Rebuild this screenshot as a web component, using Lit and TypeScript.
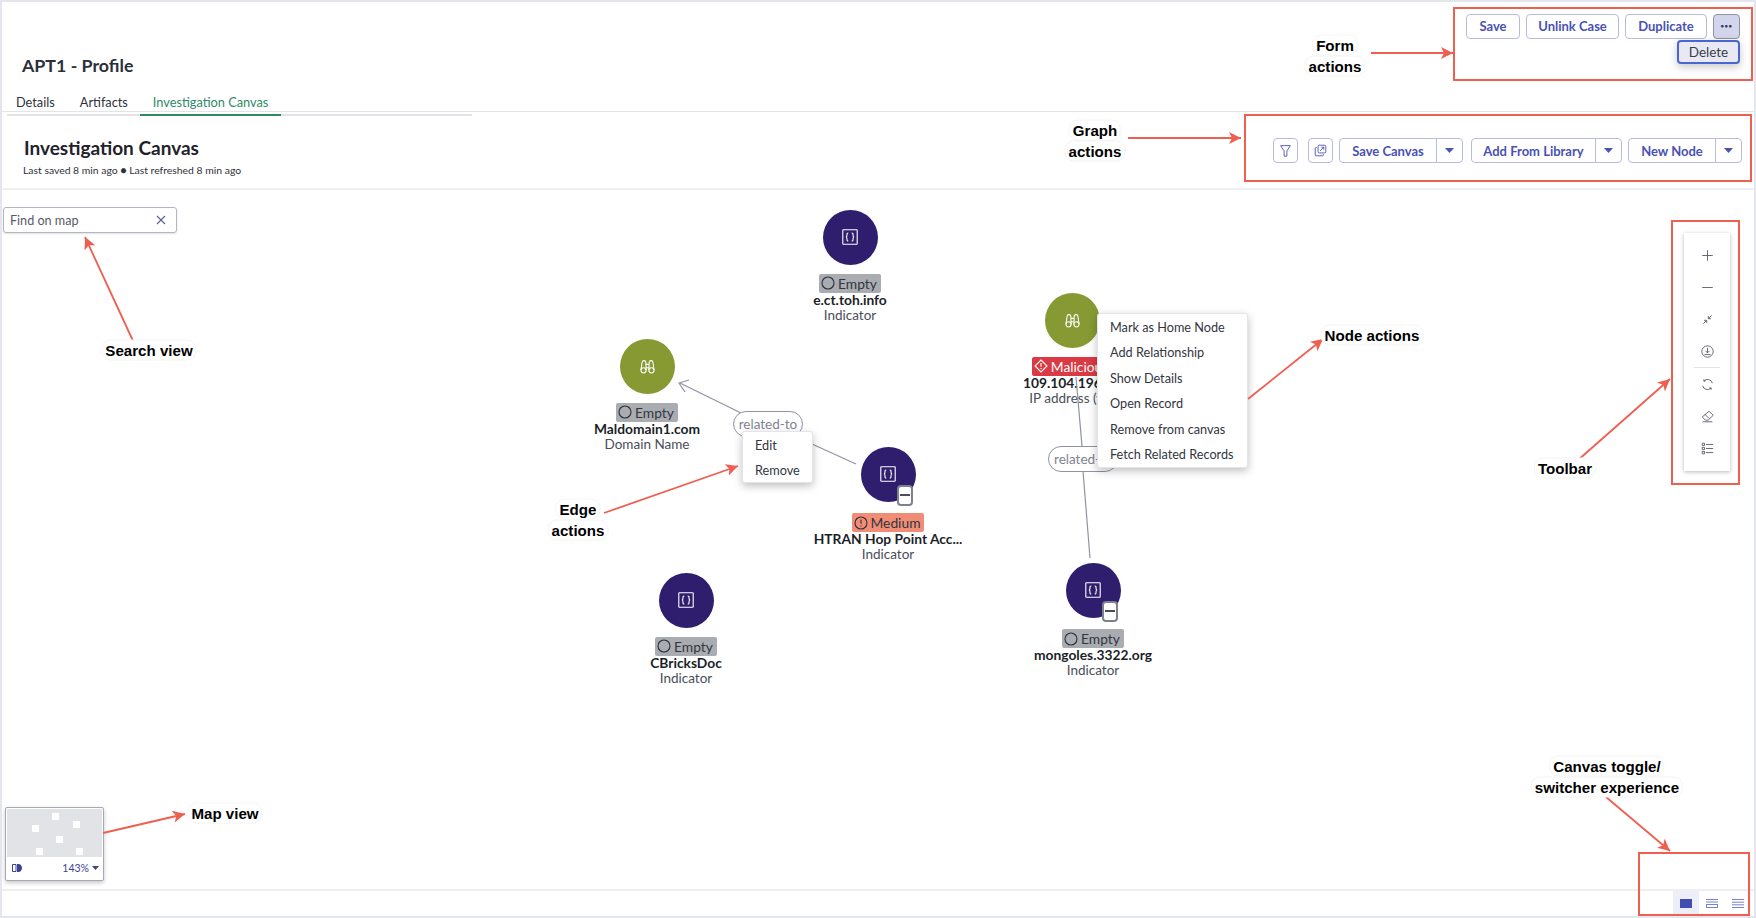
import { LitElement, html, css, svg } from "lit";
import { customElement } from "lit/decorators.js";

const OX = 2;
const OY = 190;

interface GraphNode { x: number; y: number; kind: "ind" | "dom"; sev: "empty" | "medium" | "mal"; label: string; name: string; type: string; collapse?: boolean; }

const NODES: GraphNode[] = [
  { x: 850, y: 237, kind: "ind", sev: "empty", label: "Empty", name: "e.ct.toh.info", type: "Indicator" },
  { x: 647, y: 366, kind: "dom", sev: "empty", label: "Empty", name: "Maldomain1.com", type: "Domain Name" },
  { x: 888, y: 474, kind: "ind", sev: "medium", label: "Medium", name: "HTRAN Hop Point Acc...", type: "Indicator", collapse: true },
  { x: 686, y: 600, kind: "ind", sev: "empty", label: "Empty", name: "CBricksDoc", type: "Indicator" },
  { x: 1072, y: 320, kind: "dom", sev: "mal", label: "Malicious", name: "109.104.196.85", type: "IP address (v4)" },
  { x: 1093, y: 590, kind: "ind", sev: "empty", label: "Empty", name: "mongoles.3322.org", type: "Indicator", collapse: true },
];

const NOTES = [
  { x: 1335, y: 45, t: "Form" }, { x: 1335, y: 66, t: "actions" },
  { x: 1095, y: 130, t: "Graph" }, { x: 1095, y: 151, t: "actions" },
  { x: 149, y: 350, t: "Search view" },
  { x: 1372, y: 335, t: "Node actions" },
  { x: 1565, y: 468, t: "Toolbar" },
  { x: 578, y: 509, t: "Edge" }, { x: 578, y: 530, t: "actions" },
  { x: 225, y: 813, t: "Map view" },
  { x: 1607, y: 766, t: "Canvas toggle/" }, { x: 1607, y: 787, t: "switcher experience" },
];

const ARROWS = [
  [1371, 53, 1453, 53], [1128, 138, 1241, 138], [134, 343, 85, 237], [1248, 399, 1323, 339],
  [1577, 461, 1670, 379], [604, 513, 738, 466], [103, 833, 185, 814], [1606, 797, 1670, 851],
];

const BOXES = [
  [1454, 8, 298, 72], [1245, 115, 506, 66], [1672, 221, 67, 263], [1639, 853, 110, 62],
];

const DOTS = [[52, 813], [32, 825], [73, 821], [56, 836], [36, 848], [76, 848]];

const caret = html`<svg class="caret" width="9" height="5" viewBox="0 0 9 5"><path d="M0 0h9L4.5 5z"/></svg>`;

const indicatorIcon = html`<svg width="16" height="16" viewBox="0 0 16 16" fill="none" stroke="#fff" stroke-width="1.1"><rect x=".8" y=".8" width="14.4" height="14.4" rx=".5"/><path d="M6.300 4c-1.500 0-1.300 1-1.300 2.100 0 1-.1 1.700-1 1.900.9.200 1 .9 1 1.900S4.800 12 6.300 12M9.700 4c1.500 0 1.300 1 1.300 2.100 0 1 .1 1.700 1 1.900-.9.200-1 .9-1 1.900s.2 2.100-1.300 2.100"/></svg>`;
const binocIcon = html`<svg width="15" height="15" viewBox="0 0 14 14" fill="none" stroke="#fff" stroke-width="1"><circle cx="3.300" cy="10.600" r="2.400"/><circle cx="10.700" cy="10.600" r="2.400"/><path d="M.9 10.300 2 2.800c.2-1.700 3.200-1.700 3.400 0l.3 7.800M13.100 10.300 12 2.800c-.2-1.700-3.200-1.700-3.400 0l-.3 7.800M5.500 5h3M5.600 8.200h2.800"/></svg>`;

const sevIcon = (s: GraphNode["sev"]) =>
  s === "empty"
    ? html`<svg width="14" height="14" viewBox="0 0 14 14" fill="none" stroke="#2b2f3a" stroke-width="1.1"><circle cx="7" cy="7" r="6"/></svg>`
    : s === "medium"
    ? html`<svg width="14" height="14" viewBox="0 0 14 14" fill="none" stroke="#2b2f3a" stroke-width="1.1"><circle cx="7" cy="7" r="6"/><path d="M7 3.400v4.400M7 9.400v1.200"/></svg>`
    : html`<svg width="14" height="14" viewBox="0 0 14 14" fill="none" stroke="#fff" stroke-width="1.1"><path d="M7 1 13 7 7 13 1 7z"/><path d="M7 4v3.800M7 9v1.100"/></svg>`;

const toolIcons = [
  html`<svg viewBox="0 0 16 16"><path d="M8 1.500v13M1.500 8h13"/></svg>`,
  html`<svg viewBox="0 0 16 16"><path d="M1.500 8h13"/></svg>`,
  html`<svg viewBox="0 0 16 16"><path d="M3 13 7 9M3.800 9H7v3.200M13 3 9 7M12.200 7H9V3.800"/></svg>`,
  html`<svg viewBox="0 0 16 16"><circle cx="8" cy="8" r="7"/><path d="M8 3.500v6M5.500 7.200 8 9.700l2.500-2.500M4.300 11.800h7.400"/></svg>`,
];
const toolIcons2 = [
  html`<svg viewBox="0 0 16 16"><path d="M14 6.400A6.200 6.200 0 0 0 3.600 3.600M2 9.600a6.200 6.200 0 0 0 10.400 2.800"/><path d="M3.500 1.600v2.200h2.200M12.500 14.400v-2.200h-2.200"/></svg>`,
  html`<svg viewBox="0 0 16 16"><path d="M10 1.500 15 6.500 8.800 12.500H5.500L1.500 8.500zM4.800 5.300l5 5M2 14.500h12"/></svg>`,
  html`<svg viewBox="0 0 16 16"><path d="M6 3h9M6 8h9M6 13h9"/><path d="M1.500 1.500h2.800v2.800H1.500zM1.500 6.600h2.800v2.800H1.500zM1.500 11.700h2.800v2.800H1.500z"/></svg>`,
];

@customElement("app-root")
export class AppRoot extends LitElement {
  static styles = css`
    :host { display: block; width: 1756px; height: 918px; font-family: Lato, "Noto Sans", sans-serif; }
    .page { position: relative; width: 1756px; height: 918px; box-sizing: border-box; padding: 2px; background: #e4e5ed; overflow: hidden; }
    .screen { height: 914px; background: #fff; display: flex; flex-direction: column; }

    .top { height: 110px; flex: none; box-sizing: border-box; border-bottom: 1px solid #e3e4ea; display: flex; justify-content: space-between; }
    .title { margin: 0; padding: 50px 0 0 20px; font-size: 17.8px; line-height: 26px; font-weight: 700; color: #2b2f3a; }
    .tabs { width: 465px; margin: 11px 0 0 5px; height: 27px; box-sizing: border-box; border-bottom: 2px solid #e1e3ea; display: flex; }
    .tab { padding: 0 12.5px; height: 27px; box-sizing: border-box; font-size: 12.75px; line-height: 26px; color: #2f323c; }
    .tab.first { margin-left: -3.500px; }
    .tab.on { color: #2f8a66; border-bottom: 2px solid #2f8a66; }
    .form-actions { position: relative; display: flex; gap: 6px; padding: 12px 14px 0 0; height: 25px; }
    .form-actions .btn { padding-bottom: 1px; }

    .btn { height: 25px; box-sizing: border-box; display: flex; align-items: center; justify-content: center; border: 1px solid #b9bce2; border-radius: 4px; background: #fff; color: #4a51b4; font-size: 13px; font-weight: 700; }
    .save { width: 54px; } .unlink { width: 93px; } .dup { width: 82px; }
    .more { width: 27px; background: #d3d5ec; border-color: #8f92aa; color: #33366a; letter-spacing: .5px; font-size: 6px; line-height: 1; }
    .delete { position: absolute; right: 14px; top: 38px; width: 63px; height: 24px; box-sizing: border-box; background: #e8e9f5; border: 2px solid #4a66d0; border-radius: 4px; font-size: 13.5px; color: #3a3d46; display: flex; align-items: center; justify-content: center; box-shadow: 0 3px 8px rgba(0,0,0,.22); }

    .bar { height: 78px; flex: none; box-sizing: border-box; border-bottom: 2px solid #eeeff3; display: flex; justify-content: space-between; }
    .bar h2 { margin: 0; padding: 23px 0 0 22px; font-size: 19px; line-height: 26px; font-weight: 700; color: #1f222b; }
    .bar p { margin: 2px 0 0 21px; font-size: 10.4px; line-height: 14px; color: #2f323c; }
    .graph-actions { display: flex; padding: 26px 12px 0 0; height: 25px; }
    .icon-btn { width: 25px; color: #4a51b4; }
    .icon-btn svg { width: 13px; height: 13px; fill: none; stroke: #4a51b4; stroke-width: 1.1; }
    .filter { margin-right: 10px; } .copy { margin-right: 6px; }
    .split { display: flex; margin-right: 8px; }
    .split.narrow { margin-right: 6px; }
    .split:last-child { margin-right: 0; }
    .split .lab { border-radius: 4px 0 0 4px; }
    .split .drop { width: 27px; margin-left: -1px; border-radius: 0 4px 4px 0; }
    .l1 { width: 98px; } .l2 { width: 125px; } .l3 { width: 88px; }
    .caret { fill: #4a51b4; }

    .canvas { flex: 1; position: relative; overflow: hidden; }
    .edges { position: absolute; inset: 0; width: 100%; height: 100%; pointer-events: none; }

    .node { position: absolute; width: 200px; margin-left: -100px; display: flex; flex-direction: column; align-items: center; }
    .circle { width: 55px; height: 55px; border-radius: 50%; display: flex; align-items: center; justify-content: center; position: relative; margin-bottom: 9px; }
    .circle.has-minus { margin-bottom: 11.500px; }
    .circle.ind { background: #2f1e6e; }
    .circle.dom { background: #879933; }
    .minus { position: absolute; left: 36px; top: 38px; width: 16px; height: 21px; box-sizing: border-box; border: 2px solid #7c8190; border-radius: 4px; background: #fff; display: flex; align-items: center; justify-content: center; }
    .minus i { display: block; width: 10px; height: 1.5px; background: #4a4e5a; }
    .badge { height: 19px; box-sizing: border-box; display: flex; align-items: center; gap: 3px; padding: 0 4px 0 2px; border-radius: 2px; font-size: 13.8px; color: #33363f; white-space: nowrap; }
    .badge.empty { background: #a9acb0; }
    .badge.medium { background: #f18d76; }
    .badge.mal { background: #da3a44; color: #fff; }
    .name { font-size: 13.8px; line-height: 15px; font-weight: 700; color: #1c1f29; white-space: nowrap; margin: -1px 0 1px; }
    .type { font-size: 13.5px; line-height: 15px; color: #4a4e5a; white-space: nowrap; }

    .pill { position: absolute; width: 70px; height: 26px; box-sizing: border-box; border: 1px solid #8f93a5; border-radius: 13px; background: #fff; color: #80848f; font-size: 13.5px; display: flex; align-items: center; justify-content: center; white-space: nowrap; overflow: hidden; }
    .pill-a { left: 731px; top: 221px; }
    .pill-b { left: 1046px; top: 256px; justify-content: flex-start; padding-left: 5px; }

    .menu { position: absolute; box-sizing: border-box; background: #fff; border: 1px solid #e4e5ea; border-radius: 3px; box-shadow: 0 3px 8px rgba(0,0,0,.25); font-size: 12.7px; color: #33363f; display: flex; flex-direction: column; }
    .menu div { white-space: nowrap; }
    .edge-menu { left: 740px; top: 241px; width: 71px; height: 52px; padding: 0 0 0 12px; justify-content: space-around; }
    .node-menu { left: 1095px; top: 123px; width: 151px; height: 155px; padding: .5px 0 0 12px; }
    .node-menu div { line-height: 25.6px; }

    .search { position: absolute; left: 1px; top: 17px; width: 174px; height: 26px; box-sizing: border-box; border: 1px solid #b3b6c2; border-radius: 3px; display: flex; align-items: center; justify-content: space-between; padding: 0 10px 0 6px; font-size: 12.6px; color: #565a66; box-shadow: 0 1px 2px rgba(0,0,0,.12); }
    .search svg { width: 10px; height: 10px; stroke: #5a5f99; fill: none; stroke-width: 1.1; }

    .mini { position: absolute; left: 3px; top: 617px; width: 99px; height: 74px; box-sizing: border-box; border: 1px solid #a6a8b4; border-radius: 2px; background: #fff; box-shadow: 0 2px 4px rgba(0,0,0,.22); padding: 1px; display: flex; flex-direction: column; }
    .preview { height: 48px; flex: none; background: #e2e3e7; position: relative; }
    .preview i { position: absolute; width: 7px; height: 7px; background: #fff; }
    .mini-foot { flex: 1; display: flex; align-items: center; justify-content: space-between; padding: 0 3px 0 5px; color: #3e4390; font-size: 10.5px; }
    .mini-foot span { display: flex; align-items: center; gap: 3px; }
    .mini-foot .caret { fill: #3e4390; width: 7px; height: 4px; }
    .mini-foot svg.book { width: 10px; height: 10px; }

    .toolbar { position: absolute; left: 1682px; top: 43px; width: 46px; height: 238px; box-sizing: border-box; padding-top: 6px; background: #fff; box-shadow: 0 1px 4px rgba(0,0,0,.28); display: flex; flex-direction: column; align-items: center; }
    .tool { height: 32px; flex: none; display: flex; align-items: center; justify-content: center; }
    .tool svg { width: 13px; height: 13px; fill: none; stroke: #565b68; stroke-width: 1.1; }
    .sep { width: 26px; height: 1px; flex: none; background: #e3e4e8; }

    .foot { height: 27px; flex: none; box-sizing: border-box; border-top: 2px solid #eeeff3; display: flex; justify-content: flex-end; padding-right: 3px; }
    .view { width: 26px; display: flex; align-items: center; justify-content: center; }
    .view.on { background: #eeeef8; }
    .view svg { width: 12px; height: 9px; }

    .overlay { position: absolute; inset: 0; width: 1756px; height: 918px; pointer-events: none; }
    .note { position: absolute; transform: translate(-50%, -50%); font-family: "Liberation Sans", Arial, sans-serif; font-weight: 700; font-size: 15.1px; line-height: 19px; color: #000; white-space: nowrap; background: #fff; border: 1px solid #f4f4f6; border-radius: 9px; padding: 0 3px; }
  `;

  renderNode(n: GraphNode) {
    return html`<div class="node" style="left:${n.x - OX}px;top:${n.y - 27.5 - OY}px">
      <div class="circle ${n.kind} ${n.collapse ? "has-minus" : ""}">
        ${n.kind === "ind" ? indicatorIcon : binocIcon}
        ${n.collapse ? html`<div class="minus"><i></i></div>` : ""}
      </div>
      <div class="badge ${n.sev}">${sevIcon(n.sev)}${n.label}</div>
      <div class="name">${n.name}</div>
      <div class="type">${n.type}</div>
    </div>`;
  }

  render() {
    return html`<div class="page">
      <div class="screen">
        <header class="top">
          <div>
            <h1 class="title">APT1 - Profile</h1>
            <nav class="tabs">
              <div class="tab first">Details</div>
              <div class="tab">Artifacts</div>
              <div class="tab on">Investigation Canvas</div>
            </nav>
          </div>
          <div class="form-actions">
            <div class="btn save">Save</div>
            <div class="btn unlink">Unlink Case</div>
            <div class="btn dup">Duplicate</div>
            <div class="btn more">•••</div>
            <div class="delete">Delete</div>
          </div>
        </header>
        <section class="bar">
          <div>
            <h2>Investigation Canvas</h2>
            <p>Last saved 8 min ago ● Last refreshed 8 min ago</p>
          </div>
          <div class="graph-actions">
            <div class="btn icon-btn filter"><svg viewBox="0 0 16 16"><path d="M2 2h12L9.700 8.500V15H6.300V8.500z"/></svg></div>
            <div class="btn icon-btn copy"><svg viewBox="0 0 16 16"><rect x="5" y="1.500" width="9.500" height="9.500" rx="1.500"/><path d="M3.500 4.500h-1a1 1 0 0 0-1 1v8a1 1 0 0 0 1 1h8a1 1 0 0 0 1-1v-1M7.500 8.500 12 4M9 4h3v3"/></svg></div>
            <div class="split"><div class="btn lab l1">Save Canvas</div><div class="btn drop">${caret}</div></div>
            <div class="split narrow"><div class="btn lab l2">Add From Library</div><div class="btn drop">${caret}</div></div>
            <div class="split"><div class="btn lab l3">New Node</div><div class="btn drop">${caret}</div></div>
          </div>
        </section>
        <main class="canvas">
          ${NODES.map((n) => this.renderNode(n))}
          <svg class="edges" viewBox="2 190 1752 699">
            <g fill="none" stroke="#8f93a5" stroke-width="1.2">
              <path d="M680 383 743 414M812 444 856 464"/>
              <path d="M689 380 679 383 685 392"/>
              <path d="M1076 377 1082 446M1083 471 1090 558"/>
            </g>
          </svg>
          <div class="pill pill-a">related-to</div>
          <div class="pill pill-b">related-to</div>
          <div class="menu edge-menu"><div>Edit</div><div>Remove</div></div>
          <div class="menu node-menu">
            <div>Mark as Home Node</div><div>Add Relationship</div><div>Show Details</div>
            <div>Open Record</div><div>Remove from canvas</div><div>Fetch Related Records</div>
          </div>
          <div class="search">Find on map<svg viewBox="0 0 10 10"><path d="M1 1l8 8M9 1 1 9"/></svg></div>
          <div class="mini">
            <div class="preview">${DOTS.map(([x, y]) => html`<i style="left:${x - 7}px;top:${y - 809}px"></i>`)}</div>
            <div class="mini-foot">
              <svg class="book" viewBox="0 0 10 10"><path d="M.5 1.500h3.500v7H.5z" fill="none" stroke="#3e4390"/><path d="M5 1h1.500C8.500 1 10 2.800 10 5S8.500 9 6.500 9H5z" fill="#3e4390"/></svg>
              <span>143% ${caret}</span>
            </div>
          </div>
          <div class="toolbar">
            ${toolIcons.map((i) => html`<div class="tool">${i}</div>`)}
            <div class="sep"></div>
            ${toolIcons2.map((i) => html`<div class="tool">${i}</div>`)}
          </div>
        </main>
        <footer class="foot">
          <div class="view on"><svg viewBox="0 0 12 9"><rect width="12" height="9" fill="#434fb0"/></svg></div>
          <div class="view"><svg viewBox="0 0 12 9" fill="none" stroke="#7a83cf"><path d="M0 .5h12M0 3h12"/><rect x=".5" y="5.500" width="11" height="3"/></svg></div>
          <div class="view"><svg viewBox="0 0 12 9" fill="none" stroke="#7a83cf"><path d="M0 .5h12M0 3.200h12M0 5.800h12M0 8.500h12"/></svg></div>
        </footer>
      </div>
      <svg class="overlay" viewBox="0 0 1756 918">
        <defs>
          <marker id="head" markerUnits="userSpaceOnUse" markerWidth="14" markerHeight="12" refX="12" refY="6" orient="auto">
            <path d="M0 0 12 6 0 12 3 6z" fill="#ef5f50"/>
          </marker>
        </defs>
        ${BOXES.map(([x, y, w, h]) => svg`<rect x=${x} y=${y} width=${w} height=${h} fill="none" stroke="#ef5f50" stroke-width="2"/>`)}
        ${ARROWS.map(([a, b, c, d]) => svg`<line x1=${a} y1=${b} x2=${c} y2=${d} stroke="#ef5f50" stroke-width="1.800" marker-end="url(#head)"/>`)}
      </svg>
      ${NOTES.map((n) => html`<div class="note" style="left:${n.x}px;top:${n.y}px">${n.t}</div>`)}
    </div>`;
  }
}
